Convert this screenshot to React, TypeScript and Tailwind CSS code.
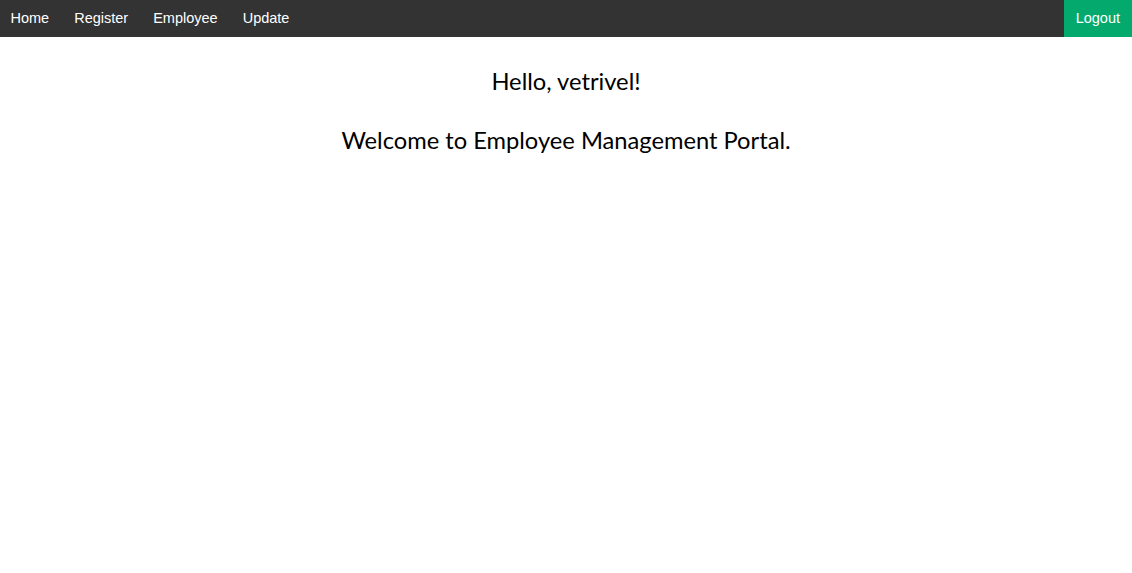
import React from "react";

export default function App() {
  const links = ["Home", "Register", "Employee", "Update"];
  return (
    <div className="min-h-screen bg-white">
      <nav className="flex h-[37px] bg-[#333333]" style={{ fontFamily: '"Liberation Sans", Arial, sans-serif' }}>
        <div className="-ml-[2px] flex">
          {links.map((l) => (
            <a key={l} className="block px-[12.5px] py-[10px] text-[14.5px] leading-[17px] text-white">
              {l}
            </a>
          ))}
        </div>
        <a className="ml-auto block bg-[#04AA6D] px-[12px] py-[10px] text-[14.5px] leading-[17px] text-white">
          Logout
        </a>
      </nav>
      <div className="text-center text-black" style={{ fontFamily: 'Lato, "Open Sans", sans-serif' }}>
        <h2 className="mt-[29px] text-[23.7px] leading-[30px]">Hello, vetrivel!</h2>
        <h2 className="mt-[29px] text-[23.7px] leading-[30px]">Welcome to Employee Management Portal.</h2>
      </div>
    </div>
  );
}
